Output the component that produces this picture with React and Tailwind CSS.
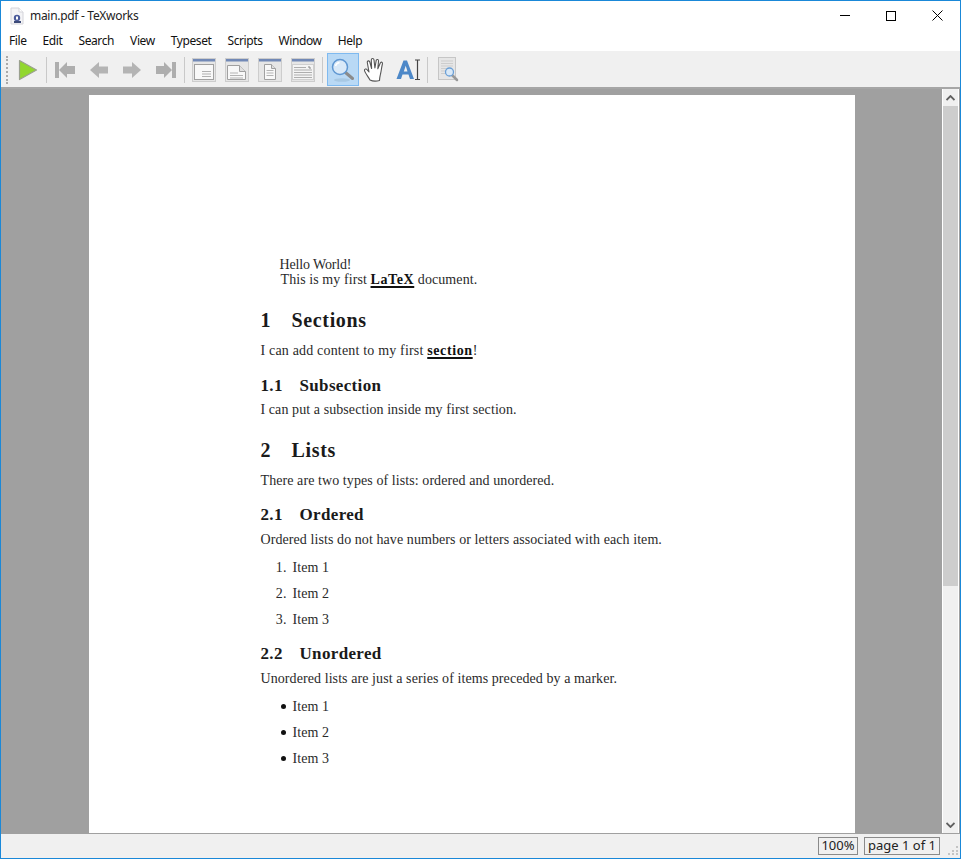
import React from 'react';

const menus = ['File', 'Edit', 'Search', 'View', 'Typeset', 'Scripts', 'Window', 'Help'];

const serif = "font-['Liberation_Serif',serif] text-[#2a2a2a] text-[14px] leading-[15px] h-[15px] whitespace-nowrap tracking-[0.08px]";
const h1 = "font-['Liberation_Serif',serif] font-bold text-[#1a1a1a] text-[20px] leading-[22px] h-[22px] whitespace-nowrap tracking-[0.65px] flex";
const h2 = "font-['Liberation_Serif',serif] font-bold text-[#1a1a1a] text-[17px] leading-[18px] h-[18px] whitespace-nowrap tracking-[0.34px] flex";
const strong = 'font-bold text-[#111] tracking-[0.6px] underline underline-offset-2 decoration-[1.5px]';

const FileIcon = () => (
  <svg width="16" height="18" viewBox="0 0 16 18">
    <path d="M2 1h8l4 4v12H2z" fill="#f4f4f6" stroke="#d4d4da" />
    <path d="M10 1v4h4" fill="#fff" stroke="#d4d4da" />
    <circle cx="8" cy="11" r="3.2" fill="#4a5a9a" />
    <path d="M5 14h7v2H5z" fill="#3c4a78" />
    <path d="M7 9.500h2v3H7z" fill="#fff" />
  </svg>
);

const Play = () => (
  <svg width="20" height="22" viewBox="0 0 20 22">
    <path d="M1.500 1.500L18.500 11L1.500 20.500z" fill="#92d72e" stroke="#9aa08f" strokeWidth="1.200" strokeLinejoin="round" />
  </svg>
);

const NavIcon = ({ kind }) => (
  <svg width="22" height="20" viewBox="0 0 22 20" style={{ filter: 'blur(0.7px)' }}>
    {kind === 'first' && <path d="M1 2h4v16H1z M21 6v8h-8v4L5 10l8-8v4z" fill="#aeaeae" />}
    {kind === 'prev' && <path d="M20 6.500v7h-9V18L2 10l9-8v4.500z" fill="#b4b4b4" />}
    {kind === 'next' && <path d="M2 6.500v7h9V18l9-8-9-8v4.500z" fill="#b4b4b4" />}
    {kind === 'last' && <path d="M17 2h4v16h-4z M1 6v8h8v4l8-8-8-8v4z" fill="#aeaeae" />}
  </svg>
);

const DocIcon = ({ kind }) => (
  <svg width="24" height="24" viewBox="0 0 24 24" style={{ filter: 'blur(0.25px)' }}>
    <rect x="0.500" y="0.500" width="23" height="23" fill="#e6e6e6" stroke="#cdcdcd" />
    <rect x="1" y="1" width="22" height="2.500" fill="#7289b6" />
    {kind === 'a' && (
      <>
        <rect x="2.500" y="6.500" width="19" height="15" fill="#f8f8f8" stroke="#a0a0a0" />
        <path d="M10 13.500h9M10 16h9M10 18.500h9" stroke="#b0b0b0" />
      </>
    )}
    {kind === 'b' && (
      <>
        <path d="M2.500 7.500h12l6 6v8h-18z" fill="#f8f8f8" stroke="#a0a0a0" />
        <path d="M14.500 7.500v6h6" fill="#e0e0e0" stroke="#a0a0a0" />
        <path d="M5 15h8M5 17.500h13M5 20h13" stroke="#b4b4b4" />
      </>
    )}
    {kind === 'c' && (
      <>
        <path d="M6.500 6.500h7l4 4v11h-11z" fill="#f8f8f8" stroke="#a0a0a0" />
        <path d="M13.500 6.500v4h4" fill="#e0e0e0" stroke="#a0a0a0" />
        <path d="M8.500 12.500h7M8.500 15h7M8.500 17.500h7" stroke="#b4b4b4" />
      </>
    )}
    {kind === 'd' && (
      <>
        <rect x="1.500" y="6.500" width="21" height="15" fill="#f4f4f4" stroke="#d0d0d0" />
        <path d="M3 9.500h12M3 12h18M3 14.500h18M3 17h18M3 19.500h18" stroke="#aeaeae" />
        <path d="M18 8v2h2" fill="none" stroke="#888" />
      </>
    )}
  </svg>
);

const Magnifier = () => (
  <svg width="26" height="26" viewBox="0 0 26 26" style={{ filter: 'blur(0.3px)' }}>
    <ellipse cx="12" cy="23" rx="8" ry="1.800" fill="#a3c3de" opacity="0.8" />
    <path d="M15.500 15.500L22.500 21.500" stroke="#8b8b8b" strokeWidth="3" strokeLinecap="round" />
    <circle cx="10" cy="10" r="7.500" fill="#d9e9f8" stroke="#5f97d2" strokeWidth="1.500" />
    <path d="M5.500 9a5 5 0 0 1 4-3.500" fill="none" stroke="#fff" strokeWidth="1.500" />
  </svg>
);

const Hand = () => (
  <svg width="24" height="26" viewBox="0 0 24 26">
    <path
      d="M7 23C5.500 20 2 16 1.500 13.500C1.200 11.800 3.300 11.500 4.200 12.800L6 15L4.300 5.500C4 3.700 6.300 3.200 6.800 5L8.600 11.500L8.300 3C8.300 1 10.800 1 11 3L11.900 11L13.200 3.500C13.600 1.800 15.800 2.300 15.500 4.200L14.800 11.800L17.300 6C18 4.400 20 5.200 19.400 7C18.500 10.500 18.300 14 17.500 17C17 19.500 16.500 21 16.500 23.500C13 24.500 10 24.500 7 23z"
      fill="#fff"
      stroke="#555"
      strokeWidth="1.100"
      strokeLinejoin="round"
    />
  </svg>
);

const SelectText = () => (
  <svg width="26" height="24" viewBox="0 0 26 24">
    <path d="M0.500 21L7.500 2.500h3.500L18 21h-4l-1.500-4.500h-6L5 21z M7.800 13.500h3.700L9.700 7.800z" fill="#4d88c8" fillRule="evenodd" />
    <path d="M19 2h5M21.500 2v19M19 21.500h5" stroke="#444" strokeWidth="1.200" fill="none" />
  </svg>
);

const Preview = () => (
  <svg width="24" height="26" viewBox="0 0 24 26" style={{ filter: 'blur(0.25px)' }}>
    <rect x="1.500" y="0.500" width="17" height="22" fill="#e6e6e6" stroke="#c6c6c6" />
    <path d="M4 4h12M4 6.500h12M4 9h12M4 11.500h6M4 14h5M4 16.500h5" stroke="#cdcdcd" />
    <path d="M15 18l5 5" stroke="#999" strokeWidth="2.500" strokeLinecap="round" />
    <circle cx="12.500" cy="15" r="4" fill="#d9e9f8" stroke="#6a9fd6" strokeWidth="1.300" />
  </svg>
);

const Sep = () => <div className="w-px h-[26px] bg-[#c9c9c9]" />;

const ListItem = ({ marker, children, first }) => (
  <div className={`${serif} flex ${first ? 'mt-[13px]' : 'mt-[11px]'}`}>
    <span className="w-[32px] flex justify-end pr-[6px]">{marker}</span>
    <span>{children}</span>
  </div>
);

const Bullet = () => <span className="w-[5px] h-[5px] mt-[5px] mr-px rounded-full bg-[#111]" />;

export default function App() {
  return (
    <div className="w-[961px] h-[859px] flex flex-col border border-[#1a88d8] bg-white overflow-hidden font-['Noto_Sans',sans-serif] text-[12px] text-black">
      {/* title bar */}
      <div className="h-[29px] flex items-center shrink-0">
        <div className="w-[29px] flex justify-center pl-[3px]">
          <FileIcon />
        </div>
        <span className="text-[12px] tracking-[-0.3px] text-[#222]">main.pdf - TeXworks</span>
        <div className="ml-auto flex items-center h-full">
          <div className="w-[46px] flex justify-center">
            <div className="w-[10px] h-px bg-black" />
          </div>
          <div className="w-[46px] flex justify-center">
            <div className="w-[10px] h-[10px] border border-black" />
          </div>
          <div className="w-[46px] flex justify-center">
            <svg width="11" height="11" viewBox="0 0 11 11">
              <path d="M0.500 0.500l10 10M10.500 0.500l-10 10" stroke="#000" strokeWidth="1" />
            </svg>
          </div>
        </div>
      </div>

      {/* menu */}
      <div className="h-[22px] flex items-center gap-[16px] pl-[8px] shrink-0 border-b border-[#f0f0f0]">
        {menus.map((m) => (
          <span key={m} className="text-[12px] tracking-[-0.4px] text-[#111]">{m}</span>
        ))}
      </div>

      {/* toolbar */}
      <div className="h-[37px] flex items-center bg-[#f0f0f0] shrink-0 border-b-2 border-[#a6a6a6]">
        <div className="w-[2px] h-[28px] ml-[5px] border-l-2 border-dotted border-[#aaa]" />
        <div className="ml-[10px]"><Play /></div>
        <div className="ml-[8px]"><Sep /></div>
        <div className="ml-[7px]"><NavIcon kind="first" /></div>
        <div className="ml-[12px]"><NavIcon kind="prev" /></div>
        <div className="ml-[11px]"><NavIcon kind="next" /></div>
        <div className="ml-[12px]"><NavIcon kind="last" /></div>
        <div className="ml-[7px]"><Sep /></div>
        <div className="ml-[7px] flex gap-[9px]">
          <DocIcon kind="a" />
          <DocIcon kind="b" />
          <DocIcon kind="c" />
          <DocIcon kind="d" />
        </div>
        <div className="ml-[7px]"><Sep /></div>
        <div className="ml-[4px] w-[32px] h-[33px] flex items-center justify-center bg-[#b9d9f5] border border-[#7fbaf0]">
          <Magnifier />
        </div>
        <div className="ml-[4px]"><Hand /></div>
        <div className="ml-[9px]"><SelectText /></div>
        <div className="ml-[5px]"><Sep /></div>
        <div className="ml-[9px]"><Preview /></div>
      </div>

      {/* document area */}
      <div className="flex-1 flex bg-[#a0a0a0] min-h-0">
        <div className="flex-1 flex justify-center pt-[6px] overflow-hidden">
          <div className="w-[766px] h-[800px] bg-white pl-[172px] pt-[162px] shrink-0">
            <div className={`${serif} pl-[19px] tracking-[-0.15px]!`}>Hello World!</div>
            <div className={`${serif} pl-[20px]`}>
              This is my first <b className={strong}>LaTeX</b> document.
            </div>
            <div className={`${h1} mt-[22px]`}><span className="w-[31px]">1</span>Sections</div>
            <div className={`${serif} mt-[12px] tracking-[0.18px]!`}>
              I can add content to my first <b className={strong}>section</b>!
            </div>
            <div className={`${h2} mt-[19px]`}><span className="w-[39px]">1.1</span>Subsection</div>
            <div className={`${serif} mt-[7px]`}>I can put a subsection inside my first section.</div>
            <div className={`${h1} mt-[22px]`}><span className="w-[31px]">2</span>Lists</div>
            <div className={`${serif} mt-[12px]`}>There are two types of lists: ordered and unordered.</div>
            <div className={`${h2} mt-[18px]`}><span className="w-[39px]">2.1</span>Ordered</div>
            <div className={`${serif} mt-[8px]`}>Ordered lists do not have numbers or letters associated with each item.</div>
            <ListItem marker="1." first>Item 1</ListItem>
            <ListItem marker="2.">Item 2</ListItem>
            <ListItem marker="3.">Item 3</ListItem>
            <div className={`${h2} mt-[18px]`}><span className="w-[39px]">2.2</span>Unordered</div>
            <div className={`${serif} mt-[8px]`}>Unordered lists are just a series of items preceded by a marker.</div>
            <ListItem marker={<Bullet />} first>Item 1</ListItem>
            <ListItem marker={<Bullet />}>Item 2</ListItem>
            <ListItem marker={<Bullet />}>Item 3</ListItem>
          </div>
        </div>
        {/* scrollbar */}
        <div className="w-[17px] mr-[1px] flex flex-col bg-[#f0f0f0] border-x border-white shrink-0">
          <div className="h-[17px] flex items-center justify-center">
            <svg width="9" height="6" viewBox="0 0 9 6"><path d="M0.500 5L4.500 1L8.500 5" fill="none" stroke="#606060" strokeWidth="1.800" /></svg>
          </div>
          <div className="h-[480px] bg-[#cdcdcd]" />
          <div className="mt-auto h-[17px] flex items-center justify-center">
            <svg width="9" height="6" viewBox="0 0 9 6"><path d="M0.500 1L4.500 5L8.500 1" fill="none" stroke="#606060" strokeWidth="1.800" /></svg>
          </div>
        </div>
      </div>

      {/* status bar */}
      <div className="h-[25px] flex items-center justify-end bg-[#f0f0f0] border-t border-[#a0a0a0] shrink-0">
        <div className="h-[18px] w-[40px] border border-[#8a8a8a] flex items-center justify-center text-[13px] text-[#222] mr-[6px]">100%</div>
        <div className="h-[18px] w-[76px] border border-[#8a8a8a] flex items-center justify-center text-[13px] text-[#222]">page 1 of 1</div>
        <div className="w-[20px] h-full flex items-end justify-end pr-[2px] pb-[3px]">
          <svg width="10" height="10" viewBox="0 0 10 10">
            <path d="M8 1h2v2H8zM4 5h2v2H4zM8 5h2v2H8zM0 8h2v2H0zM4 8h2v2H4zM8 8h2v2H8z" fill="#c4c4c4" />
          </svg>
        </div>
      </div>
    </div>
  );
}
